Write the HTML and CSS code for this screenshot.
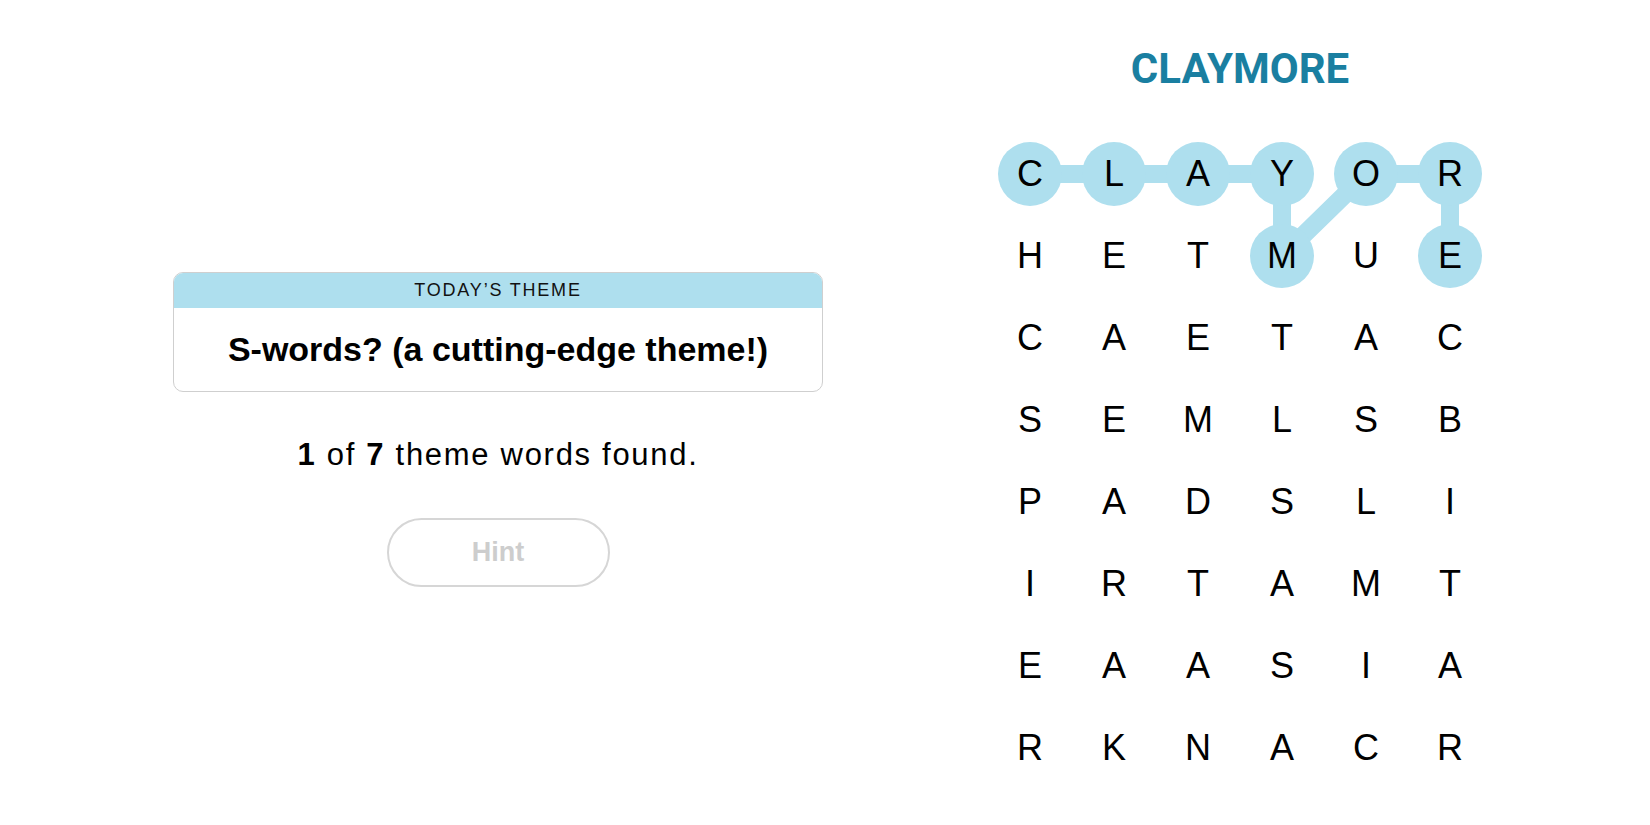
FILE: index.html
```html
<!DOCTYPE html>
<html lang="en">
<head>
<meta charset="utf-8">
<title>Strands</title>
<link rel="stylesheet" href="styles.css">
</head>
<body>
<main class="game">
  <section class="info">
    <div class="theme-card">
      <div class="theme-head">TODAY’S THEME</div>
      <div class="theme-body">S-words? (a cutting-edge theme!)</div>
    </div>
    <p class="counter"><b>1</b> of <b>7</b> theme words found.</p>
    <button class="hint" type="button">Hint</button>
  </section>
  <section class="board">
    <h1 class="current-word">CLAYMORE</h1>
    <div class="grid-wrap">
      <svg class="trail" width="504" height="656" viewBox="0 0 504 656" aria-hidden="true">
        <polyline points="42,41 126,41 210,41 294,41 294,123 378,41 462,41 462,123" />
        <circle cx="42" cy="41" r="32" />
        <circle cx="126" cy="41" r="32" />
        <circle cx="210" cy="41" r="32" />
        <circle cx="294" cy="41" r="32" />
        <circle cx="294" cy="123" r="32" />
        <circle cx="378" cy="41" r="32" />
        <circle cx="462" cy="41" r="32" />
        <circle cx="462" cy="123" r="32" />
      </svg>
      <div class="grid">
        <span>C</span><span>L</span><span>A</span><span>Y</span><span>O</span><span>R</span>
        <span>H</span><span>E</span><span>T</span><span>M</span><span>U</span><span>E</span>
        <span>C</span><span>A</span><span>E</span><span>T</span><span>A</span><span>C</span>
        <span>S</span><span>E</span><span>M</span><span>L</span><span>S</span><span>B</span>
        <span>P</span><span>A</span><span>D</span><span>S</span><span>L</span><span>I</span>
        <span>I</span><span>R</span><span>T</span><span>A</span><span>M</span><span>T</span>
        <span>E</span><span>A</span><span>A</span><span>S</span><span>I</span><span>A</span>
        <span>R</span><span>K</span><span>N</span><span>A</span><span>C</span><span>R</span>
      </div>
    </div>
  </section>
</main>
</body>
</html>
```
FILE: styles.css
```css
html, body {
  margin: 0;
  padding: 0;
  background: #ffffff;
}

body {
  font-family: "Liberation Sans", Arial, sans-serif;
  color: #121212;
}

.game {
  display: flex;
  align-items: flex-start;
  padding-left: 173px;
  gap: 165px;
  height: 825px;
  box-sizing: border-box;
}

/* Left column */
.info {
  width: 650px;
  display: flex;
  flex-direction: column;
  align-items: center;
  padding-top: 272px;
}

.theme-card {
  width: 100%;
  box-sizing: border-box;
  border: 1px solid #cfcfcf;
  border-radius: 10px;
  overflow: hidden;
}

.theme-head {
  height: 35px;
  background: #aedfee;
  display: flex;
  align-items: center;
  justify-content: center;
  font-size: 18px;
  letter-spacing: 1.8px;
  color: #121212;
}

.theme-body {
  height: 83px;
  display: flex;
  align-items: center;
  justify-content: center;
  font-size: 34px;
  font-weight: 700;
  color: #000000;
}

.counter {
  margin: 45px 0 0;
  font-size: 31px;
  line-height: 36px;
  letter-spacing: 1.7px;
  color: #000000;
}

.counter b {
  font-weight: 700;
}

.hint {
  margin-top: 45px;
  width: 223px;
  height: 69px;
  border: 2px solid #d6d6d6;
  border-radius: 35px;
  background: #ffffff;
  font-family: "Liberation Sans", Arial, sans-serif;
  font-size: 27px;
  font-weight: 700;
  color: #cdcdcd;
  padding: 0;
}

/* Right column */
.board {
  width: 504px;
  display: flex;
  flex-direction: column;
  align-items: center;
  padding-top: 45px;
}

.current-word {
  margin: 0;
  font-family: Roboto, "Liberation Sans", Arial, sans-serif;
  font-size: 42px;
  line-height: 48px;
  font-weight: 700;
  color: #1a7fa1;
}

.grid-wrap {
  position: relative;
  margin-top: 40px;
  width: 504px;
  height: 656px;
}

.trail {
  position: absolute;
  top: 0;
  left: 0;
}

.trail polyline {
  fill: none;
  stroke: #aedfee;
  stroke-width: 18;
  stroke-linejoin: round;
}

.trail circle {
  fill: #aedfee;
}

.grid {
  position: relative;
  display: grid;
  grid-template-columns: repeat(6, 84px);
  grid-auto-rows: 82px;
}

.grid span {
  display: flex;
  align-items: center;
  justify-content: center;
  font-size: 36px;
  color: #000000;
}
```
